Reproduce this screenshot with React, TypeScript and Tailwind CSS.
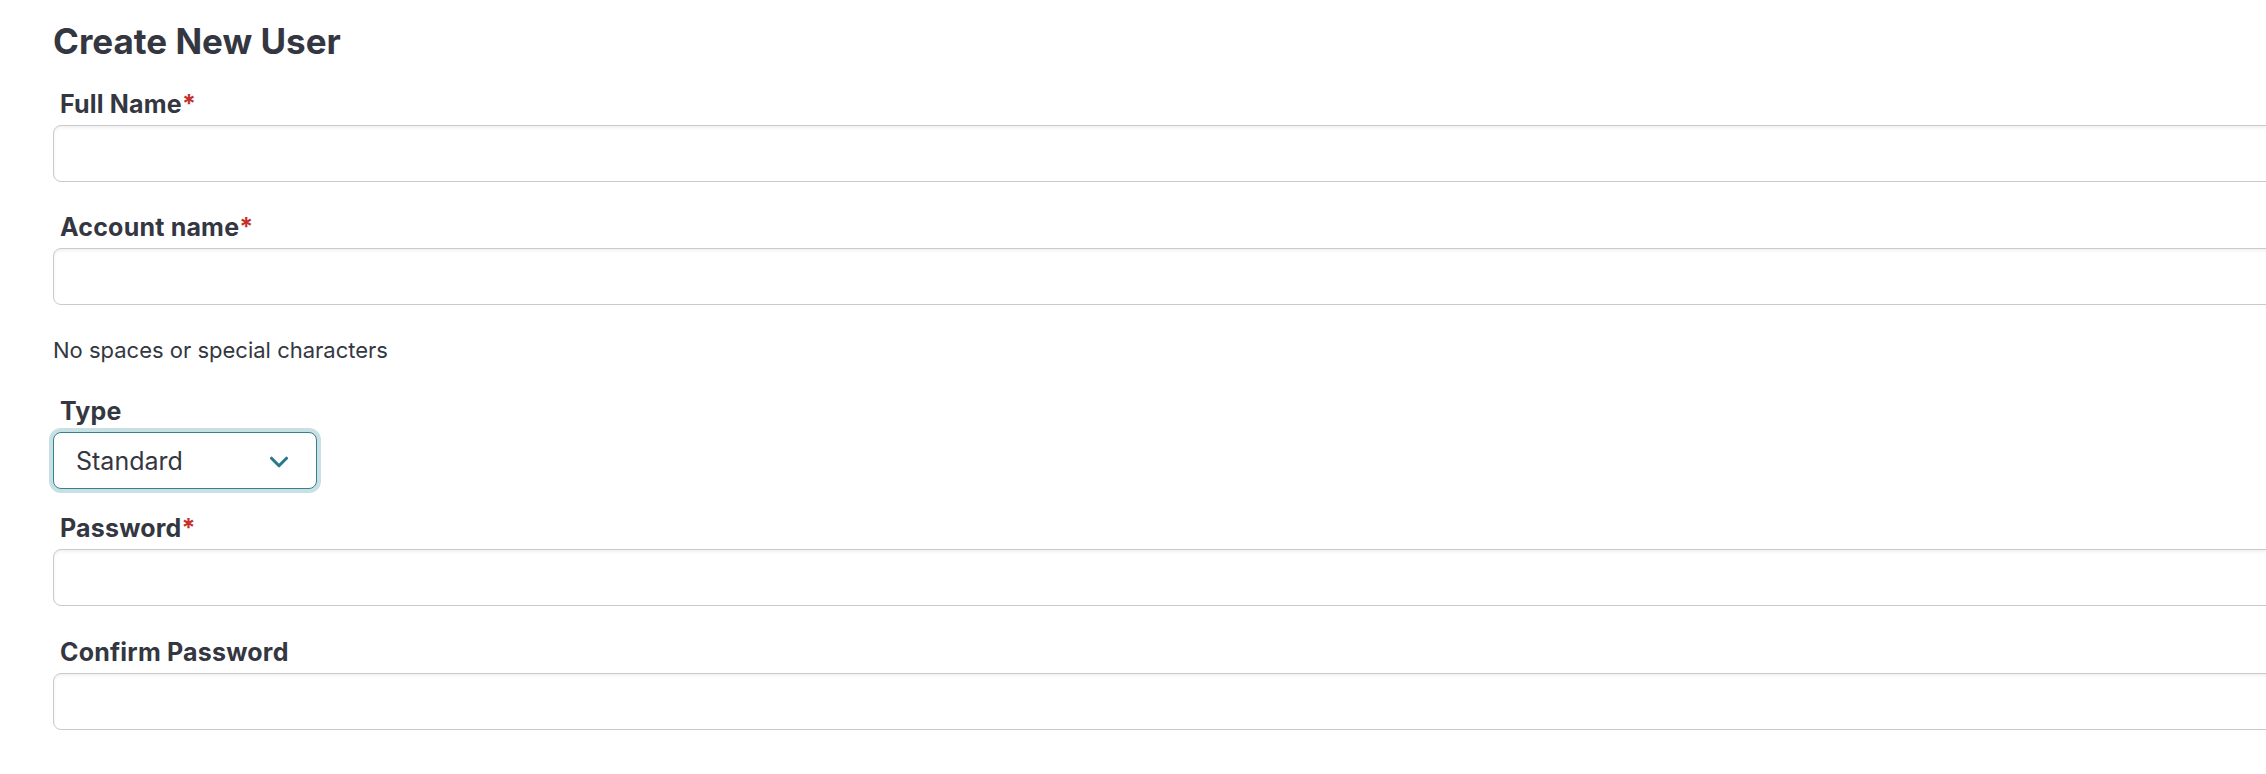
import { ChevronDown } from "lucide-react";

const labelCls = "block pl-[7px] text-[25px] leading-[32px] font-bold tracking-[0.2px] text-[#343741]";
const inputCls =
  "block h-[57px] w-[2300px] rounded-[8px] border border-[#c9c9ce] bg-white shadow-[inset_0_2px_3px_rgba(0,0,0,0.06)] outline-none";

const Field = ({ label, required, className }: { label: string; required?: boolean; className?: string }) => (
  <div className={className}>
    <label className={labelCls}>
      {label}
      {required && <span className="text-[#c4302b]">*</span>}
    </label>
    <input type="text" className={`${inputCls} mt-[5px]`} />
  </div>
);

const App = () => {
  return (
    <div
      className="h-[774px] w-full overflow-hidden bg-white"
      style={{ fontFamily: "Inter, 'Noto Sans', sans-serif" }}
    >
      <div className="pl-[53px] pt-[19px]">
        {/* Heading */}
        <h1 className="text-[35px] leading-[44px] font-bold text-[#343741]">Create New User</h1>

        <Field label="Full Name" required className="mt-[25px]" />
        <Field label="Account name" required className="mt-[29px]" />

        <p className="mt-[31px] text-[22px] leading-[28px] text-[#343741]">No spaces or special characters</p>

        {/* Type select */}
        <div className="mt-[31px]">
          <label className={labelCls}>Type</label>
          <div className="mt-[5px] flex h-[57px] w-[264px] items-center justify-between rounded-[8px] border-[1.5px] border-[#3a7f8c] bg-white pl-[22px] pr-[22px] pt-[2px] shadow-[0_0_0_4px_#c6e0e4]">
            <span className="text-[25px] text-[#343741]">Standard</span>
            <ChevronDown className="h-[30px] w-[30px] text-[#2b7a8a]" strokeWidth={2.5} />
          </div>
        </div>

        <Field label="Password" required className="mt-[23px]" />
        <Field label="Confirm Password" className="mt-[30px]" />
      </div>
    </div>
  );
};

export default App;
